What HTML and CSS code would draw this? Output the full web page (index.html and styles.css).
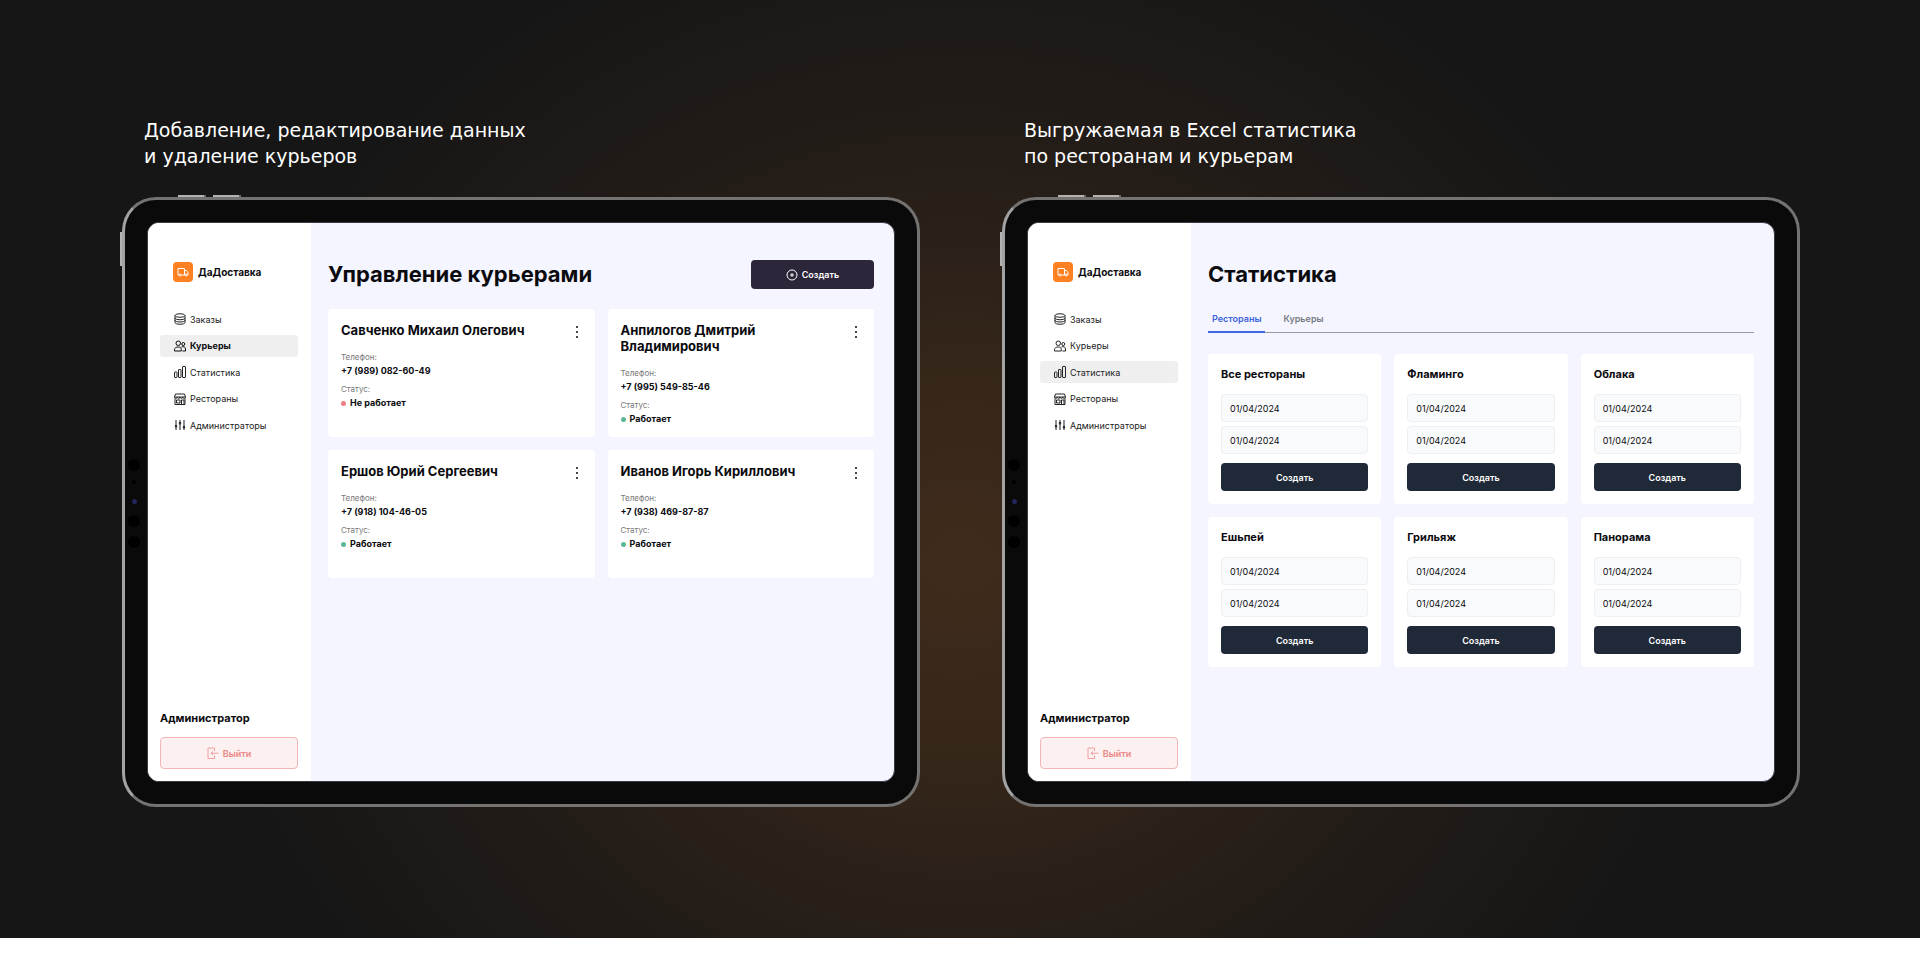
FILE: index.html
```
<!DOCTYPE html>
<html lang="ru">
<head>
<meta charset="utf-8">
<title>ДаДоставка</title>
<link rel="stylesheet" href="styles.css">
</head>
<body>
<svg class="sprite" aria-hidden="true">
  <symbol id="truck" viewBox="0 0 24 24"><path d="M4 18H2V5h13v13H9M15 9h4l3 4v5h-2M15 18h1"/><circle cx="6.500" cy="18" r="2"/><circle cx="18" cy="18" r="2"/></symbol>
  <symbol id="orders" viewBox="0 0 24 24"><ellipse cx="12" cy="5" rx="10" ry="3.500"/><path d="M2 5v14c0 2 4 3.500 10 3.500s10-1.500 10-3.500V5M2 10c0 2 4 3.500 10 3.500s10-1.500 10-3.500M2 14.500C2 16.500 6 18 12 18s10-1.500 10-3.500"/></symbol>
  <symbol id="people" viewBox="0 0 24 24"><circle cx="8.500" cy="6.500" r="4.500"/><circle cx="18.500" cy="8" r="3"/><path d="M1 22v-3c0-3 3-5 7.500-5s6 2 6 5v3zM15 14c4-2 8 0 8 4v4h-6"/></symbol>
  <symbol id="chart" viewBox="0 0 24 24"><rect x="1" y="12" width="5" height="11" rx="1"/><rect x="9" y="7" width="5" height="16" rx="1"/><rect x="17" y="1" width="6" height="22" rx="1"/></symbol>
  <symbol id="shop" viewBox="0 0 24 24"><path d="M3 2h18l2 6H1zM1 8c0 4 5 4 5.500 0 .5 4 5 4 5.500 0 .5 4 5 4 5.500 0 .5 4 5.500 4 5.500 0M2 11v12h20V11M5 14h7v6H5zM15 23v-9h5v9"/></symbol>
  <symbol id="sliders" viewBox="0 0 24 24"><path d="M4 2v20M12 2v20M20 2v20M2 14l2-2 2 2-2 3zM10 8l2-2 2 2-2 3zM18 16l2-2 2 2-2 3z"/></symbol>
  <symbol id="plus" viewBox="0 0 24 24"><circle cx="12" cy="12" r="10"/><path d="M12 8v8M8 12h8"/></symbol>
  <symbol id="exit" viewBox="0 0 24 24"><path d="M15 8V2H2v21h13v-6M23 12.500H8M12 9l-4 3.500 4 3.500"/></symbol>
</svg>
<main class="stage">
  <section class="showcase">
    <h2 class="caption">Добавление, редактирование данных<br>и удаление курьеров</h2>
    <div class="tablet">
      <span class="key key-power"></span><span class="key key-up"></span><span class="key key-down"></span>
      <div class="sensors"><i class="lens"></i><i class="mic"></i><i class="spark"></i><i class="lens"></i><i class="lens"></i></div>
      <div class="screen">
        <aside class="sidebar">
          <a class="brand" href="#"><span class="logo"><svg class="icon"><use href="#truck"/></svg></span>ДаДоставка</a>
          <nav class="nav">
            <a class="nav-link" href="#"><svg class="icon"><use href="#orders"/></svg>Заказы</a>
            <a class="nav-link current strong" href="#"><svg class="icon"><use href="#people"/></svg>Курьеры</a>
            <a class="nav-link" href="#"><svg class="icon"><use href="#chart"/></svg>Статистика</a>
            <a class="nav-link" href="#"><svg class="icon"><use href="#shop"/></svg>Рестораны</a>
            <a class="nav-link" href="#"><svg class="icon"><use href="#sliders"/></svg>Администраторы</a>
          </nav>
          <p class="role">Администратор</p>
          <button class="logout" type="button"><svg class="icon"><use href="#exit"/></svg>Выйти</button>
        </aside>
        <div class="content">
          <header class="head"><h1 class="title">Управление курьерами</h1><button class="create" type="button"><svg class="icon"><use href="#plus"/></svg>Создать</button></header>
          <div class="couriers">
            <article class="courier">
              <div class="courier-head"><h3 class="name">Савченко Михаил Олегович</h3><button class="more" type="button" aria-label="Меню"><i></i><i></i><i></i></button></div>
              <dl class="facts"><dt>Телефон:</dt><dd>+7 (989) 082-60-49</dd><dt>Статус:</dt><dd class="status off">Не работает</dd></dl>
            </article>
            <article class="courier">
              <div class="courier-head"><h3 class="name">Анпилогов Дмитрий Владимирович</h3><button class="more" type="button" aria-label="Меню"><i></i><i></i><i></i></button></div>
              <dl class="facts"><dt>Телефон:</dt><dd>+7 (995) 549-85-46</dd><dt>Статус:</dt><dd class="status">Работает</dd></dl>
            </article>
            <article class="courier">
              <div class="courier-head"><h3 class="name">Ершов Юрий Сергеевич</h3><button class="more" type="button" aria-label="Меню"><i></i><i></i><i></i></button></div>
              <dl class="facts"><dt>Телефон:</dt><dd>+7 (918) 104-46-05</dd><dt>Статус:</dt><dd class="status">Работает</dd></dl>
            </article>
            <article class="courier">
              <div class="courier-head"><h3 class="name">Иванов Игорь Кириллович</h3><button class="more" type="button" aria-label="Меню"><i></i><i></i><i></i></button></div>
              <dl class="facts"><dt>Телефон:</dt><dd>+7 (938) 469-87-87</dd><dt>Статус:</dt><dd class="status">Работает</dd></dl>
            </article>
          </div>
        </div>
      </div>
    </div>
  </section>
  <section class="showcase">
    <h2 class="caption">Выгружаемая в Excel статистика<br>по ресторанам и курьерам</h2>
    <div class="tablet">
      <span class="key key-power"></span><span class="key key-up"></span><span class="key key-down"></span>
      <div class="sensors"><i class="lens"></i><i class="mic"></i><i class="spark"></i><i class="lens"></i><i class="lens"></i></div>
      <div class="screen">
        <aside class="sidebar">
          <a class="brand" href="#"><span class="logo"><svg class="icon"><use href="#truck"/></svg></span>ДаДоставка</a>
          <nav class="nav">
            <a class="nav-link" href="#"><svg class="icon"><use href="#orders"/></svg>Заказы</a>
            <a class="nav-link" href="#"><svg class="icon"><use href="#people"/></svg>Курьеры</a>
            <a class="nav-link current" href="#"><svg class="icon"><use href="#chart"/></svg>Статистика</a>
            <a class="nav-link" href="#"><svg class="icon"><use href="#shop"/></svg>Рестораны</a>
            <a class="nav-link" href="#"><svg class="icon"><use href="#sliders"/></svg>Администраторы</a>
          </nav>
          <p class="role">Администратор</p>
          <button class="logout" type="button"><svg class="icon"><use href="#exit"/></svg>Выйти</button>
        </aside>
        <div class="content">
          <header class="head"><h1 class="title">Статистика</h1></header>
          <div class="tabs"><button class="tab selected" type="button">Рестораны</button><button class="tab" type="button">Курьеры</button></div>
          <div class="reports">
            <form class="report"><h3 class="place">Все рестораны</h3><input class="date" aria-label="С" value="01/04/2024"><input class="date" aria-label="По" value="01/04/2024"><button class="submit" type="button">Создать</button></form>
            <form class="report"><h3 class="place">Фламинго</h3><input class="date" aria-label="С" value="01/04/2024"><input class="date" aria-label="По" value="01/04/2024"><button class="submit" type="button">Создать</button></form>
            <form class="report"><h3 class="place">Облака</h3><input class="date" aria-label="С" value="01/04/2024"><input class="date" aria-label="По" value="01/04/2024"><button class="submit" type="button">Создать</button></form>
            <form class="report"><h3 class="place">Ешьпей</h3><input class="date" aria-label="С" value="01/04/2024"><input class="date" aria-label="По" value="01/04/2024"><button class="submit" type="button">Создать</button></form>
            <form class="report"><h3 class="place">Грильяж</h3><input class="date" aria-label="С" value="01/04/2024"><input class="date" aria-label="По" value="01/04/2024"><button class="submit" type="button">Создать</button></form>
            <form class="report"><h3 class="place">Панорама</h3><input class="date" aria-label="С" value="01/04/2024"><input class="date" aria-label="По" value="01/04/2024"><button class="submit" type="button">Создать</button></form>
          </div>
        </div>
      </div>
    </div>
  </section>
</main>
</body>
</html>
```
FILE: styles.css
```
* { box-sizing: border-box; }
body { margin: 0; background: #fff; font-family: Inter, "Noto Sans", sans-serif; color: #0b0b0f; }
h1, h2, h3, p, dl, dd { margin: 0; }
button, input { font: inherit; color: inherit; }
a { color: inherit; text-decoration: none; }
.sprite { display: none; }
.icon { flex: none; width: 12px; height: 12px; fill: none; stroke: currentColor; stroke-width: 2; stroke-linejoin: round; }

.stage {
  display: grid; grid-template-columns: 1fr 1fr; gap: 82px;
  padding: 117px 120px 131px 122px;
  background: radial-gradient(ellipse 760px 680px at 50% 60%, #3f2b1c 0%, #37271a 25%, #241d18 60%, #161616 100%) #161616;
}
.caption { padding-left: 22px; margin-bottom: 28px; font: 400 19px/26px "DejaVu Sans", sans-serif; color: #fff; }

.tablet { position: relative; padding: 22px; border: 3px solid #757372; border-left-color: #a3a3a3; border-radius: 34px; background: #0a0a0a; }
.key { position: absolute; background: #b5b3b2; border-right: 2px solid #6a6969; }
.key-up, .key-down { top: -5px; width: 28px; height: 2px; }
.key-up { left: 53px; }
.key-down { left: 88px; }
.key-power { top: 32px; left: -5px; width: 2px; height: 34px; border: 0; }
.sensors { position: absolute; top: 259px; left: 3px; width: 12px; display: grid; justify-items: center; gap: 9px; }
.lens { width: 12px; height: 12px; border-radius: 50%; background: #000; }
.mic { width: 4px; height: 4px; border-radius: 50%; background: #000; }
.spark { width: 5px; height: 5px; margin: 6px 0 2px; border-radius: 50%; background: #23265c; }

.screen { display: flex; min-height: 560px; border: 1px solid #3a3b42; border-radius: 12px; overflow: hidden; background: #f4f5ff; }
.sidebar { display: flex; flex-direction: column; flex: 0 0 163px; padding: 39px 13px 12px 12px; background: #fff; }
.brand { display: flex; align-items: center; gap: 5px; padding-left: 13px; font-size: 10px; line-height: 20px; font-weight: 700; }
.logo { display: grid; place-items: center; width: 20px; height: 20px; border-radius: 4px; background: #ff8020; color: #fff; }
.nav { display: grid; align-content: space-between; height: 128px; margin-top: 26px; }
.nav-link { display: flex; align-items: center; gap: 4px; height: 22px; padding-left: 14px; border-radius: 3px; font-size: 9px; color: #222; }
.current { background: #efefef; }
.strong { font-weight: 700; color: #0b0b0f; }
.role { margin-top: auto; font-size: 11px; line-height: 16px; font-weight: 700; }
.logout { display: flex; align-items: center; justify-content: center; gap: 4px; height: 32px; margin-top: 11px; border: 1px solid #f3b5b5; border-radius: 4px; background: #fdf0f0; color: #ec8585; font-size: 9px; font-weight: 600; }
.logout .icon { stroke-width: 1.500; }

.content { flex: 1; min-width: 0; padding: 37px 20px 20px 17px; }
.head { display: flex; align-items: center; justify-content: space-between; height: 29px; }
.title { font-size: 22px; line-height: 29px; font-weight: 700; }
.create { display: flex; align-items: center; justify-content: center; gap: 4px; width: 123px; height: 29px; border: 0; border-radius: 4px; background: #2d263b; color: #fff; font-size: 9px; font-weight: 600; }
.couriers { display: grid; grid-template-columns: 1fr 1fr; gap: 13px; margin-top: 20px; }
.courier { min-height: 128px; padding: 13px 13px 11px; border-radius: 4px; background: #fff; }
.courier-head { display: flex; justify-content: space-between; align-items: start; gap: 12px; }
.name { max-width: 190px; font-size: 13px; line-height: 16px; font-weight: 700; }
.more { display: grid; gap: 3px; width: 6px; margin: 4px 0 0; padding: 0; border: 0; background: none; }
.more i { width: 2px; height: 2px; border-radius: 50%; background: #0b0b0f; }
.facts { margin-top: 12px; font-size: 9px; line-height: 14px; }
.facts dt { font-size: 8px; color: #777; }
.facts dd { font-weight: 700; }
.facts dd + dt { margin-top: 4px; }
.status { display: flex; align-items: center; gap: 4px; }
.status::before { content: ""; width: 5px; height: 5px; border-radius: 50%; background: #5cb894; }
.off::before { background: #f07c84; }

.tabs { display: flex; gap: 14px; margin-top: 18px; border-bottom: 1px solid #9799a5; }
.tab { height: 26px; margin-bottom: -1px; padding: 0 4px 2px; border: 0; border-bottom: 2px solid transparent; background: none; font-size: 9px; font-weight: 600; color: #777a83; }
.selected { border-color: #4267df; color: #3c62dc; }
.reports { display: grid; grid-template-columns: repeat(3, 1fr); gap: 13px; margin-top: 21px; }
.report { display: flex; flex-direction: column; padding: 13px; border-radius: 4px; background: #fff; }
.place { margin-bottom: 13px; font-size: 11px; line-height: 14px; font-weight: 700; }
.date { width: 100%; height: 28px; margin-bottom: 4px; padding: 0 8px; border: 1px solid #edeff2; border-radius: 4px; background: #f9fafc; font-size: 9px; }
.submit { height: 28px; margin-top: 5px; border: 0; border-radius: 4px; background: #1f2937; color: #fff; font-size: 9px; font-weight: 600; }
```
